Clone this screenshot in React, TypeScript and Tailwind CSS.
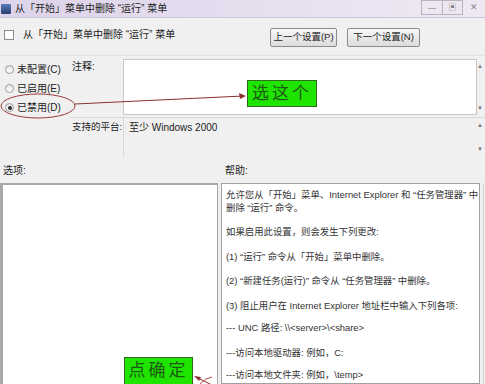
import React from 'react';

const cjk = { fontFamily: '"Liberation Sans", "Noto Sans CJK SC", sans-serif' };

function Radio({ label, checked }: { label: string; checked?: boolean }) {
    return (
        <div className="flex items-center gap-[3px] h-[19px]">
            <span className="flex h-[9px] w-[9px] items-center justify-center rounded-full border border-[#9a9a9a] bg-gradient-to-b from-[#e4e4e4] to-white">
                {checked && <span className="h-[4px] w-[4px] rounded-full bg-[#2a2a2a]" />}
            </span>
            <span className="text-[10px] text-[#222]">{label}</span>
        </div>
    );
}

function ScrollStub() {
    return (
        <div className="flex w-[8px] flex-col justify-between py-[4px] text-[6px] leading-none text-[#777]">
            <span>▲</span>
            <span>▼</span>
        </div>
    );
}

export default function App() {
    return (
        <div className="relative h-[384px] w-[485px] overflow-hidden bg-[#f0f0f0]" style={cjk}>
            {/* title bar */}
            <div className="flex h-[18px] items-center justify-between bg-gradient-to-r from-[#ddd3ea] to-[#efe9f4] border-b border-[#cfc6da]">
                <div className="flex items-center gap-[4px] pl-[1px]">
                    <span className="h-[10px] w-[10px] rounded-[1px] bg-gradient-to-b from-[#5a7cb8] to-[#2a3f72]" />
                    <span className="text-[10px] text-[#1d1d1d]">从「开始」菜单中删除 “运行” 菜单</span>
                </div>
                <div className="flex items-start self-start">
                    <span className="flex h-[15px] w-[22px] items-center justify-center border border-[#b9b2c3] bg-[#ece8f0] text-[8px] text-[#777]">—</span>
                    <span className="flex h-[15px] w-[20px] items-center justify-center border border-l-0 border-[#b9b2c3] bg-[#ece8f0] text-[8px] text-[#777]">▣</span>
                    <span className="flex h-[15px] w-[22px] items-center justify-center text-[9px] text-[#888]">✕</span>
                </div>
            </div>

            {/* header row */}
            <div className="flex h-[38px] items-start justify-between border-b border-[#e2e2e2] pr-[65px]">
                <div className="flex items-center gap-[9px] pl-[4px] pt-[9px]">
                    <span className="h-[10px] w-[10px] border border-[#8a8a8a] bg-white" />
                    <span className="text-[10px] text-[#222]">从「开始」菜单中删除 “运行” 菜单</span>
                </div>
                <div className="flex gap-[10px] pt-[10px]">
                    <button className="h-[19px] w-[67px] rounded-[2px] border border-[#8c8c8c] bg-gradient-to-b from-[#f7f7f7] to-[#dcdcdc] text-[9.5px] text-[#222]">上一个设置(P)</button>
                    <button className="h-[19px] w-[73px] rounded-[2px] border border-[#8c8c8c] bg-gradient-to-b from-[#f7f7f7] to-[#dcdcdc] text-[9.5px] text-[#222]">下一个设置(N)</button>
                </div>
            </div>

            {/* middle */}
            <div className="flex h-[101px] pt-[3px]">
                <div className="w-[70px] pl-[5px] pt-[1px]">
                    <Radio label="未配置(C)" />
                    <Radio label="已启用(E)" />
                    <Radio label="已禁用(D)" checked />
                </div>
                <div className="flex flex-1 flex-col">
                    <div className="flex h-[56px]">
                        <div className="w-[53px] pl-[2px] text-[10px] text-[#222]">注释:</div>
                        <div className="flex-1 border border-[#c8c8c8] bg-white" />
                        <ScrollStub />
                    </div>
                    <div className="mt-[2px] flex h-[39px] border-t border-[#d8d8d8]">
                        <div className="w-[53px] whitespace-nowrap pl-[2px] pt-[2px] text-[9.5px] text-[#222]">支持的平台:</div>
                        <div className="flex-1 border-l border-[#d8d8d8] pl-[5px] pt-[2px] text-[10px] text-[#222]">至少 Windows 2000</div>
                        <ScrollStub />
                    </div>
                </div>
            </div>

            {/* labels */}
            <div className="flex h-[26px] items-center text-[10px] text-[#222]">
                <div className="w-[225px] pl-[3px]">选项:</div>
                <div>帮助:</div>
            </div>

            {/* bottom panels */}
            <div className="flex h-[201px] gap-[3px]">
                <div className="w-[218px] border-l-[3px] border-t-[2px] border-r border-[#a8a8a8] bg-white" />
                <div className="w-[259px] whitespace-nowrap border border-[#a0a0a0] bg-white px-[4px] pt-[5px] text-[9.4px] leading-[12.5px] text-[#333]">
                    <p>允许您从「开始」菜单、Internet Explorer 和 “任务管理器” 中<br />删除 “运行” 命令。</p>
                    <p className="mt-[12px]">如果启用此设置，则会发生下列更改:</p>
                    <p className="mt-[12px]">(1) “运行” 命令从「开始」菜单中删除。</p>
                    <p className="mt-[12px]">(2) “新建任务(运行)” 命令从 “任务管理器” 中删除。</p>
                    <p className="mt-[12px]">(3) 阻止用户在 Internet Explorer 地址栏中输入下列各项:</p>
                    <p className="mt-[10px]">--- UNC 路径: \\&lt;server&gt;\&lt;share&gt;</p>
                    <p className="mt-[12px]">---访问本地驱动器: 例如，C:</p>
                    <p className="mt-[10px]">---访问本地文件夹: 例如，\temp&gt;</p>
                </div>
                <div className="flex-1 border-l border-[#d0d0d0] bg-[#f7f7f7]" />
            </div>

            {/* annotations */}
            <svg className="pointer-events-none absolute left-0 top-0" width="485" height="384">
                <ellipse cx="38" cy="106" rx="37" ry="12" fill="none" stroke="#9b3b3b" strokeWidth="1" />
                <line x1="75" y1="104" x2="243" y2="96" stroke="#8a2f2f" strokeWidth="1" />
                <polygon points="246,96 239,93 240,99" fill="#8a2f2f" />
                <line x1="196" y1="377" x2="214" y2="386" stroke="#8a2f2f" strokeWidth="1" />
                <polygon points="194,376 201,377 199,381" fill="#8a2f2f" />
                <path d="M200 384 Q 205 378 212 377" fill="none" stroke="#b04a4a" strokeWidth="1" />
            </svg>
            <div className="absolute left-[247px] top-[80px] flex h-[27px] w-[70px] items-center justify-center border border-[#2f6a1d] bg-[#1ee400] text-[17px] tracking-[3px] text-[#1f5a14]">选这个</div>
            <div className="absolute left-[124px] top-[357px] flex h-[28px] w-[69px] items-center justify-center border border-[#2f6a1d] bg-[#1ee400] text-[17px] tracking-[3px] text-[#1f5a14]">点确定</div>
        </div>
    );
}
